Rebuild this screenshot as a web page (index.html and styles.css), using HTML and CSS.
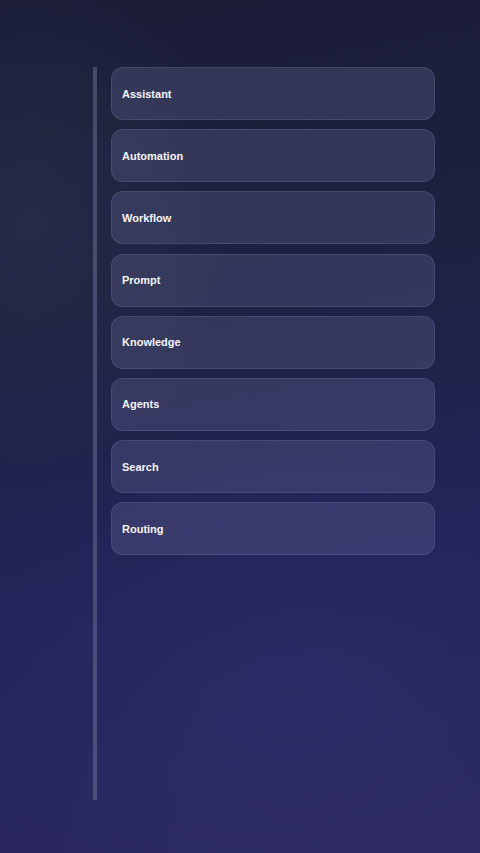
FILE: index.html
```html
<!DOCTYPE html>
<html lang="en">
<head>
<meta charset="utf-8">
<title>Menu</title>
<link rel="stylesheet" href="styles.css">
</head>
<body>
<div class="page">
  <div class="rail"></div>
  <ul class="list">
    <li class="card">Assistant</li>
    <li class="card">Automation</li>
    <li class="card">Workflow</li>
    <li class="card">Prompt</li>
    <li class="card">Knowledge</li>
    <li class="card">Agents</li>
    <li class="card">Search</li>
    <li class="card">Routing</li>
  </ul>
</div>
</body>
</html>
```
FILE: styles.css
```css
html, body {
  margin: 0;
  padding: 0;
  height: 100%;
}
body {
  font-family: "Liberation Sans", Arial, sans-serif;
  background:
    radial-gradient(ellipse 200px 260px at 30px 220px, rgba(55, 62, 90, 0.35), rgba(55, 62, 90, 0) 100%),
    radial-gradient(ellipse 320px 280px at 300px 720px, rgba(60, 55, 120, 0.3), rgba(60, 55, 120, 0) 100%),
    linear-gradient(170deg, #1b1d36 0%, #1e2140 35%, #23245a 65%, #2b285f 100%);
  min-height: 853px;
}
.page {
  display: flex;
  gap: 14px;
  padding: 67px 45px 0 93px;
  box-sizing: border-box;
}
.rail {
  width: 4px;
  height: 733px;
  background: rgba(120, 125, 160, 0.45);
  flex: none;
}
.list {
  list-style: none;
  margin: 0;
  padding: 0;
  flex: 1;
  display: flex;
  flex-direction: column;
  gap: 9.2px;
}
.card {
  height: 53px;
  box-sizing: border-box;
  display: flex;
  align-items: center;
  padding: 0 10px;
  border-radius: 12px;
  background: rgba(110, 115, 160, 0.28);
  border: 1px solid rgba(150, 155, 200, 0.18);
  color: #f4f4fa;
  font-weight: bold;
  font-size: 11px;
}
```
